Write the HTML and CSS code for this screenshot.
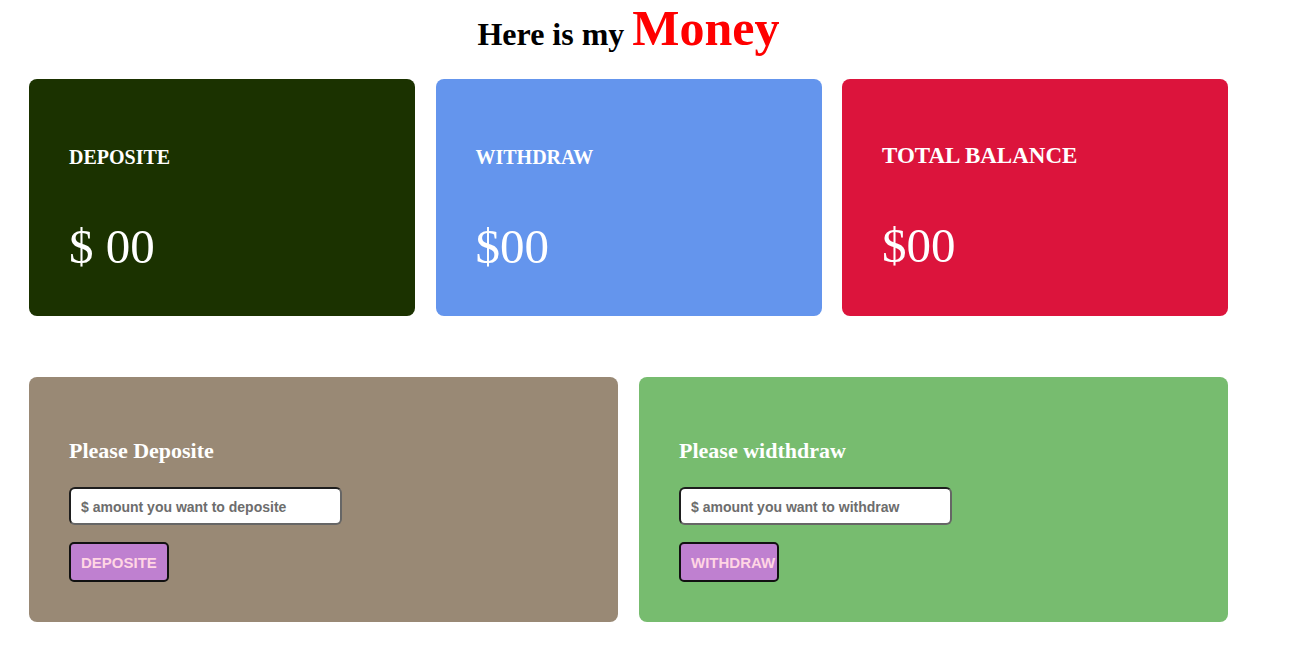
FILE: index.html
```html
<!DOCTYPE html>
<html>
<head>
<meta charset="utf-8">
<link rel="stylesheet" href="styles.css">
</head>
<body>
<div class="wrap">
  <h1 class="title">Here is my <span class="money">Money</span></h1>
  <div class="stats">
    <div class="stat stat-deposit">
      <h3 class="stat-label">DEPOSITE</h3>
      <h1 class="stat-value">$ 00</h1>
    </div>
    <div class="stat stat-withdraw">
      <h3 class="stat-label">WITHDRAW</h3>
      <h1 class="stat-value">$00</h1>
    </div>
    <div class="stat stat-total">
      <h2 class="stat-label stat-label-big">TOTAL BALANCE</h2>
      <h1 class="stat-value">$00</h1>
    </div>
  </div>
  <div class="forms">
    <div class="panel panel-deposit">
      <h2 class="panel-title">Please Deposite</h2>
      <input class="field" type="text" placeholder="$ amount you want to deposite">
      <button class="btn">DEPOSITE</button>
    </div>
    <div class="panel panel-withdraw">
      <h2 class="panel-title">Please widthdraw</h2>
      <input class="field" type="text" placeholder="$ amount you want to withdraw">
      <button class="btn">WITHDRAW</button>
    </div>
  </div>
</div>
</body>
</html>
```

FILE: styles.css
```css
body {
  margin: 0;
  font-family: "Liberation Serif", "Times New Roman", serif;
  background: #ffffff;
}
.wrap {
  width: 1199px;
  margin-left: 29px;
}
.title {
  margin: 0;
  height: 79px;
  box-sizing: border-box;
  padding-top: 0;
  text-align: center;
  font-size: 32px;
  font-weight: bold;
  line-height: 56px;
  color: #000;
}
.money {
  color: #ff0000;
  font-size: 50px;
}
.stats {
  display: grid;
  grid-template-columns: repeat(3, 1fr);
  column-gap: 20.5px;
}
.stat {
  border-radius: 8px;
  padding: 64px 40px 41px;
  height: 237px;
  box-sizing: border-box;
  color: #ffffff;
}
.stat-deposit { background: #1b3200; }
.stat-withdraw { background: #6495ed; }
.stat-total { background: #dc143c; }
.stat-label {
  margin: 0;
  font-size: 20px;
  line-height: 28px;
  font-weight: bold;
}
.stat-label-big {
  font-size: 23px;
  margin-top: -1px;
  margin-bottom: 1px;
}
.stat-value {
  margin: 48px 0 0;
  font-size: 49px;
  line-height: 56px;
  font-weight: normal;
}
.forms {
  display: grid;
  grid-template-columns: 1fr 1fr;
  column-gap: 21px;
  margin-top: 61px;
}
.panel {
  border-radius: 8px;
  height: 245px;
  box-sizing: border-box;
  padding: 60px 40px 40px;
  display: flex;
  flex-direction: column;
  align-items: flex-start;
}
.panel-deposit { background: #998975; }
.panel-withdraw { background: #77bc6f; }
.panel-title {
  margin: 0;
  font-size: 22px;
  line-height: 28px;
  color: #ffffff;
  font-weight: bold;
}
.field {
  margin-top: 22px;
  width: 273px;
  height: 38px;
  box-sizing: border-box;
  border: 2px solid #1e1e1e;
  border-right-color: #666;
  border-bottom-color: #666;
  border-radius: 6px;
  padding: 2px 10px 0;
  font-family: "Liberation Sans", Arial, sans-serif;
  font-size: 14px;
  font-weight: bold;
  background: #fff;
  outline: none;
}
.field::placeholder {
  color: #6d6d6d;
}
.btn {
  margin-top: 17px;
  width: 100px;
  height: 40px;
  box-sizing: border-box;
  border: 2px solid #111;
  border-radius: 5px;
  background: #bf80d0;
  color: #ffd6e4;
  padding: 0 10px;
  text-align: left;
  white-space: nowrap;
  overflow: visible;
  font-family: "Liberation Sans", Arial, sans-serif;
  font-size: 15px;
  font-weight: bold;
}
```
